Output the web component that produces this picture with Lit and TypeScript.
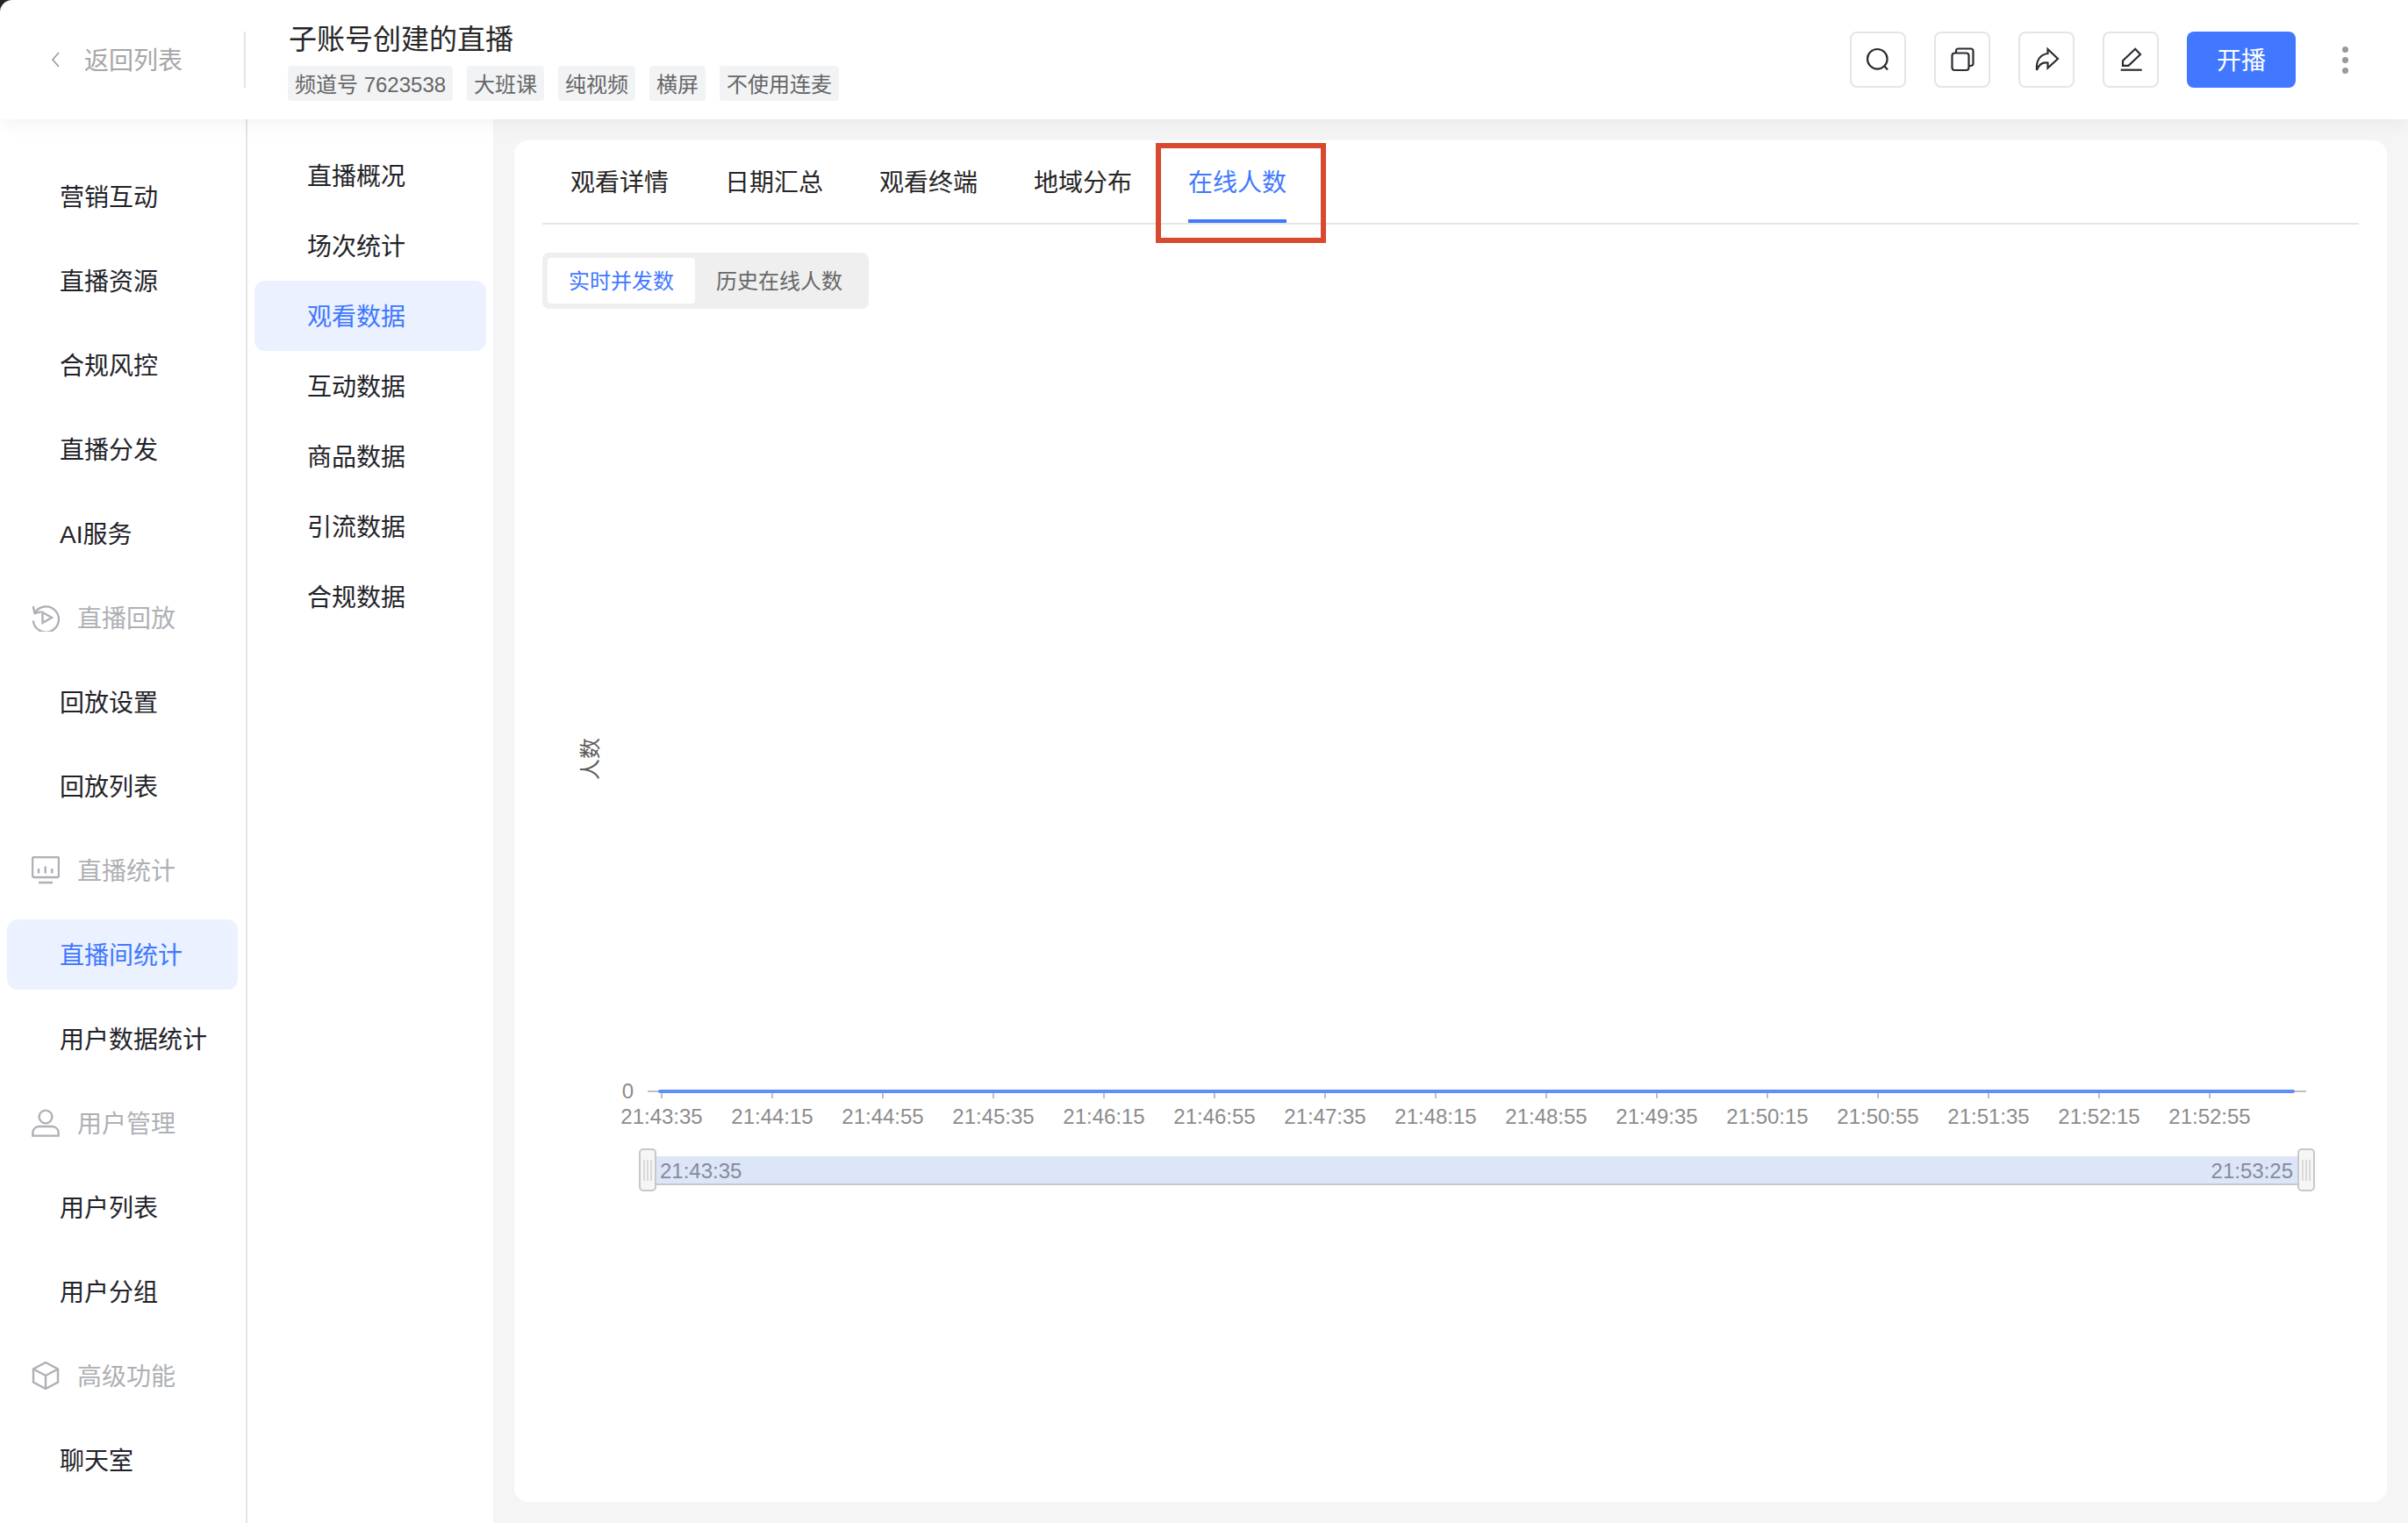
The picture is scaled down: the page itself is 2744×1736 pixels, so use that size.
import { LitElement, html, svg, css } from 'lit';
import { customElement } from 'lit/decorators.js';
import { classMap } from 'lit/directives/class-map.js';

const FONT = css`"Liberation Sans", "Noto Sans CJK SC", sans-serif`;

const groupIcons = {
  replay: svg`<path d="M1.800 3 3.500 11 11 9.300"/><path d="M3.500 11A14.600 14.600 0 1 1 1.800 19.500"/><path d="M12.500 10 23 16 12.500 22Z"/>`,
  monitor: svg`<rect x="1" y="1" width="30" height="23" rx="2"/><path d="M8 14v5.500M15.700 11.500v8M23.300 14v5.500M8 30h16"/>`,
  user: svg`<circle cx="16" cy="9" r="7.400"/><path d="M1.400 30.600V27c0-4.400 3.600-7 8-7h13.200c4.400 0 8 2.600 8 7v3.600Z"/>`,
  cube: svg`<path d="M16 1 30 8.500V23.500L16 31 2 23.500V8.500Z"/><path d="M2 8.500 16 16 30 8.500M16 16V31"/>`,
};

type GroupIcon = keyof typeof groupIcons;

interface NavItem {
  label: string;
  icon?: GroupIcon;
  active?: boolean;
}

const NAV: NavItem[] = [
  { label: '营销互动' },
  { label: '直播资源' },
  { label: '合规风控' },
  { label: '直播分发' },
  { label: 'AI服务' },
  { label: '直播回放', icon: 'replay' },
  { label: '回放设置' },
  { label: '回放列表' },
  { label: '直播统计', icon: 'monitor' },
  { label: '直播间统计', active: true },
  { label: '用户数据统计' },
  { label: '用户管理', icon: 'user' },
  { label: '用户列表' },
  { label: '用户分组' },
  { label: '高级功能', icon: 'cube' },
  { label: '聊天室' },
];

const SUB_NAV = ['直播概况', '场次统计', '观看数据', '互动数据', '商品数据', '引流数据', '合规数据'];
const TAGS = ['频道号 7623538', '大班课', '纯视频', '横屏', '不使用连麦'];
const TABS = ['观看详情', '日期汇总', '观看终端', '地域分布', '在线人数'];

const TOOL_ICONS = [
  svg`<circle cx="31.300" cy="31.300" r="11.300"/><path d="M39.500 39.500 43 43.500"/>`,
  svg`<rect x="20.500" y="24.500" width="19" height="19.500" rx="3"/><path d="M25 24v-2a2.500 2.500 0 0 1 2.500-2.500h14.500a2.500 2.500 0 0 1 2.500 2.500v14.500a2.500 2.500 0 0 1-2.500 2.500h-2"/>`,
  svg`<path d="M33.500 20 45 31 33.500 41.500V35.500C28 34.500 23.500 37 21 44 19.800 33 25 26 33.500 25Z"/>`,
  svg`<path d="M23 33.300 37.200 19.800 43 26 29.500 38.800H23Z"/><path d="M20.700 43.700H44.700"/>`,
];

const TIMES = [
  '21:43:35', '21:44:15', '21:44:55', '21:45:35', '21:46:15', '21:46:55', '21:47:35', '21:48:15',
  '21:48:55', '21:49:35', '21:50:15', '21:50:55', '21:51:35', '21:52:15', '21:52:55',
];

@customElement('online-chart')
export class OnlineChart extends LitElement {
  static styles = css`
    :host {
      display: block;
    }

    svg {
      display: block;
    }

    text {
      font-family: ${FONT};
      font-size: 24px;
      fill: #8c8c8c;
    }

    .y-title {
      fill: #595959;
    }

    .slider-label {
      fill: #838b9c;
    }

    .axis {
      stroke: #bfbfbf;
      stroke-width: 2;
      fill: none;
    }

    .series {
      stroke: #5b8ff9;
      stroke-width: 4;
      fill: none;
      stroke-linecap: round;
    }

    .handle {
      fill: #f6f6f6;
      stroke: #c8c8c8;
      stroke-width: 2;
    }

    .grip {
      stroke: #cfcfcf;
      stroke-width: 1.500;
    }
  `;

  private handle(x: number) {
    return svg`
      <rect class="handle" x=${x + 1} y="958" width="18" height="47" rx="4"></rect>
      <path class="grip" d="M${x + 6} 970V994M${x + 10} 970V994M${x + 14} 970V994"></path>
    `;
  }

  render() {
    return html`
      <svg width="2069" height="1100" viewBox="0 0 2069 1100">
        <text class="y-title" transform="translate(63 513) rotate(-90)" text-anchor="middle">人数</text>
        <text x="104" y="900" text-anchor="end">0</text>
        <path class="axis" d="M120 892H2010"></path>
        ${TIMES.map((t, i) => {
          const x = 136 + i * 126;
          return svg`
            <path class="axis" d="M${x} 892V900"></path>
            <text x=${x} y="928.500" text-anchor="middle">${t}</text>
          `;
        })}
        <path class="series" d="M134 892H1995"></path>
        <rect x="130" y="966" width="1870" height="32" fill="#dde6f8"></rect>
        <path d="M130 998H2000" stroke="#c4c8d0" stroke-width="2"></path>
        <text class="slider-label" x="134" y="990.500">21:43:35</text>
        <text class="slider-label" x="1995" y="990.500" text-anchor="end">21:53:25</text>
        ${this.handle(110)} ${this.handle(2000)}
      </svg>
    `;
  }
}

@customElement('app-root')
export class AppRoot extends LitElement {
  static styles = css`
    :host {
      display: flex;
      flex-direction: column;
      height: 100vh;
      overflow: hidden;
      background: #262626;
      font-family: ${FONT};
      font-size: 28px;
      color: #1f2329;
    }

    .header {
      position: relative;
      z-index: 1;
      flex: none;
      display: flex;
      align-items: center;
      height: 136px;
      padding-right: 68px;
      box-sizing: border-box;
      background: #fff;
      border-top-left-radius: 14px;
      box-shadow: 0 4px 24px rgb(0 0 0 / 0.06);
    }

    .back {
      flex: none;
      display: flex;
      align-items: center;
      gap: 28px;
      width: 280px;
      height: 64px;
      padding-left: 58px;
      box-sizing: border-box;
      border-right: 2px solid #e5e5e5;
      color: #a6a6a6;
      line-height: 40px;
    }

    .back span {
      padding-top: 4px;
    }

    .back svg {
      fill: none;
      stroke: #999;
      stroke-width: 1.600;
    }

    .live {
      flex: 1;
      padding-left: 48px;
    }

    .title {
      font-size: 32px;
      line-height: 44px;
      color: #262626;
      margin-top: 2px;
      margin-bottom: 8px;
      padding-left: 1px;
    }

    .tags {
      display: flex;
      gap: 16px;
    }

    .tag {
      height: 40px;
      padding: 0 8px;
      border-radius: 4px;
      background: #f2f3f5;
      color: #666;
      font-size: 24px;
      line-height: 44px;
    }

    .tools {
      display: flex;
      align-items: center;
      gap: 32px;
    }

    .tool {
      width: 64px;
      height: 64px;
      box-sizing: border-box;
      border: 2px solid #e5e5e5;
      border-radius: 8px;
      background: #fff;
    }

    .tool svg {
      display: block;
      margin: -2px;
      fill: none;
      stroke: #2b2d33;
      stroke-width: 2.200;
    }

    .start {
      width: 124px;
      height: 64px;
      border-radius: 8px;
      background: #4278ff;
      color: #fff;
      text-align: center;
      line-height: 68px;
    }

    .more {
      display: flex;
      flex-direction: column;
      gap: 5px;
      margin-left: 53px;
    }

    .more i {
      width: 7px;
      height: 7px;
      border-radius: 50%;
      background: #999;
    }

    .body {
      flex: 1;
      min-height: 0;
      display: flex;
      background: #f5f5f5;
    }

    .nav {
      flex: none;
      width: 282px;
      box-sizing: border-box;
      padding: 48px 9px 0 8px;
      border-right: 2px solid #e5e5e5;
      background: #fff;
      overflow: hidden;
    }

    .nav-item {
      display: flex;
      align-items: center;
      height: 80px;
      margin-bottom: 16px;
      padding-left: 60px;
      border-radius: 12px;
      line-height: 40px;
    }

    .nav-item span {
      padding-top: 4px;
    }

    .nav-item.group {
      gap: 20px;
      padding-left: 28px;
      color: #aeb0b5;
    }

    .nav-item.group svg {
      flex: none;
      fill: none;
      stroke: #aeb0b5;
      stroke-width: 2.400;
    }

    .nav-item.active {
      background: #ebf1fe;
      color: #3f78ff;
    }

    .sub-nav {
      flex: none;
      width: 280px;
      box-sizing: border-box;
      padding: 24px 8px 0;
      background: #fff;
    }

    .sub-item {
      height: 80px;
      padding-left: 60px;
      border-radius: 12px;
      line-height: 84px;
    }

    .sub-item.active {
      background: #ebf1fe;
      color: #3f78ff;
    }

    .card {
      flex: 1;
      min-width: 0;
      margin: 24px;
      padding: 0 32px;
      border-radius: 16px;
      background: #fff;
    }

    .tabs {
      display: flex;
      gap: 64px;
      padding-left: 32px;
      border-bottom: 2px solid #e5e5e5;
    }

    .tab {
      position: relative;
      height: 94px;
      line-height: 98px;
      color: #262626;
    }

    .tab.active {
      color: #3f78ff;
    }

    .tab.active::after {
      content: '';
      position: absolute;
      left: 0;
      right: 0;
      bottom: 0;
      height: 4px;
      background: #4278ff;
    }

    .mark {
      position: absolute;
      top: 3px;
      bottom: -23px;
      left: -37px;
      right: -45px;
      border: 6px solid #d74a2f;
    }

    .segment {
      display: inline-flex;
      margin-top: 32px;
      padding: 6px;
      border-radius: 8px;
      background: #efefef;
      font-size: 24px;
      line-height: 48px;
      color: #666;
    }

    .segment span {
      padding: 3px 24px 1px;
      border-radius: 4px;
    }

    .segment .on {
      background: #fff;
      color: #3f78ff;
    }
  `;

  render() {
    return html`
      <div class="header">
        <div class="back">
          <svg width="10" height="18" viewBox="0 0 10 18"><path d="M9 1 2 9l7 8"></path></svg>
          <span>返回列表</span>
        </div>
        <div class="live">
          <div class="title">子账号创建的直播</div>
          <div class="tags">${TAGS.map(t => html`<span class="tag">${t}</span>`)}</div>
        </div>
        <div class="tools">
          ${TOOL_ICONS.map(
            icon => html`<div class="tool"><svg width="64" height="64" viewBox="0 0 64 64">${icon}</svg></div>`,
          )}
          <div class="start">开播</div>
        </div>
        <div class="more"><i></i><i></i><i></i></div>
      </div>
      <div class="body">
        <div class="nav">
          ${NAV.map(
            item => html`
              <div class="nav-item ${classMap({ group: !!item.icon, active: !!item.active })}">
                ${item.icon
                  ? html`<svg width="32" height="32" viewBox="0 0 32 32">${groupIcons[item.icon]}</svg>`
                  : null}
                <span>${item.label}</span>
              </div>
            `,
          )}
        </div>
        <div class="sub-nav">
          ${SUB_NAV.map(
            (label, i) => html`<div class="sub-item ${classMap({ active: i === 2 })}">${label}</div>`,
          )}
        </div>
        <div class="card">
          <div class="tabs">
            ${TABS.map((label, i) => {
              const active = i === TABS.length - 1;
              return html`<div class="tab ${classMap({ active })}">
                ${label}${active ? html`<div class="mark"></div>` : null}
              </div>`;
            })}
          </div>
          <div class="segment"><span class="on">实时并发数</span><span>历史在线人数</span></div>
          <online-chart></online-chart>
        </div>
      </div>
    `;
  }
}
